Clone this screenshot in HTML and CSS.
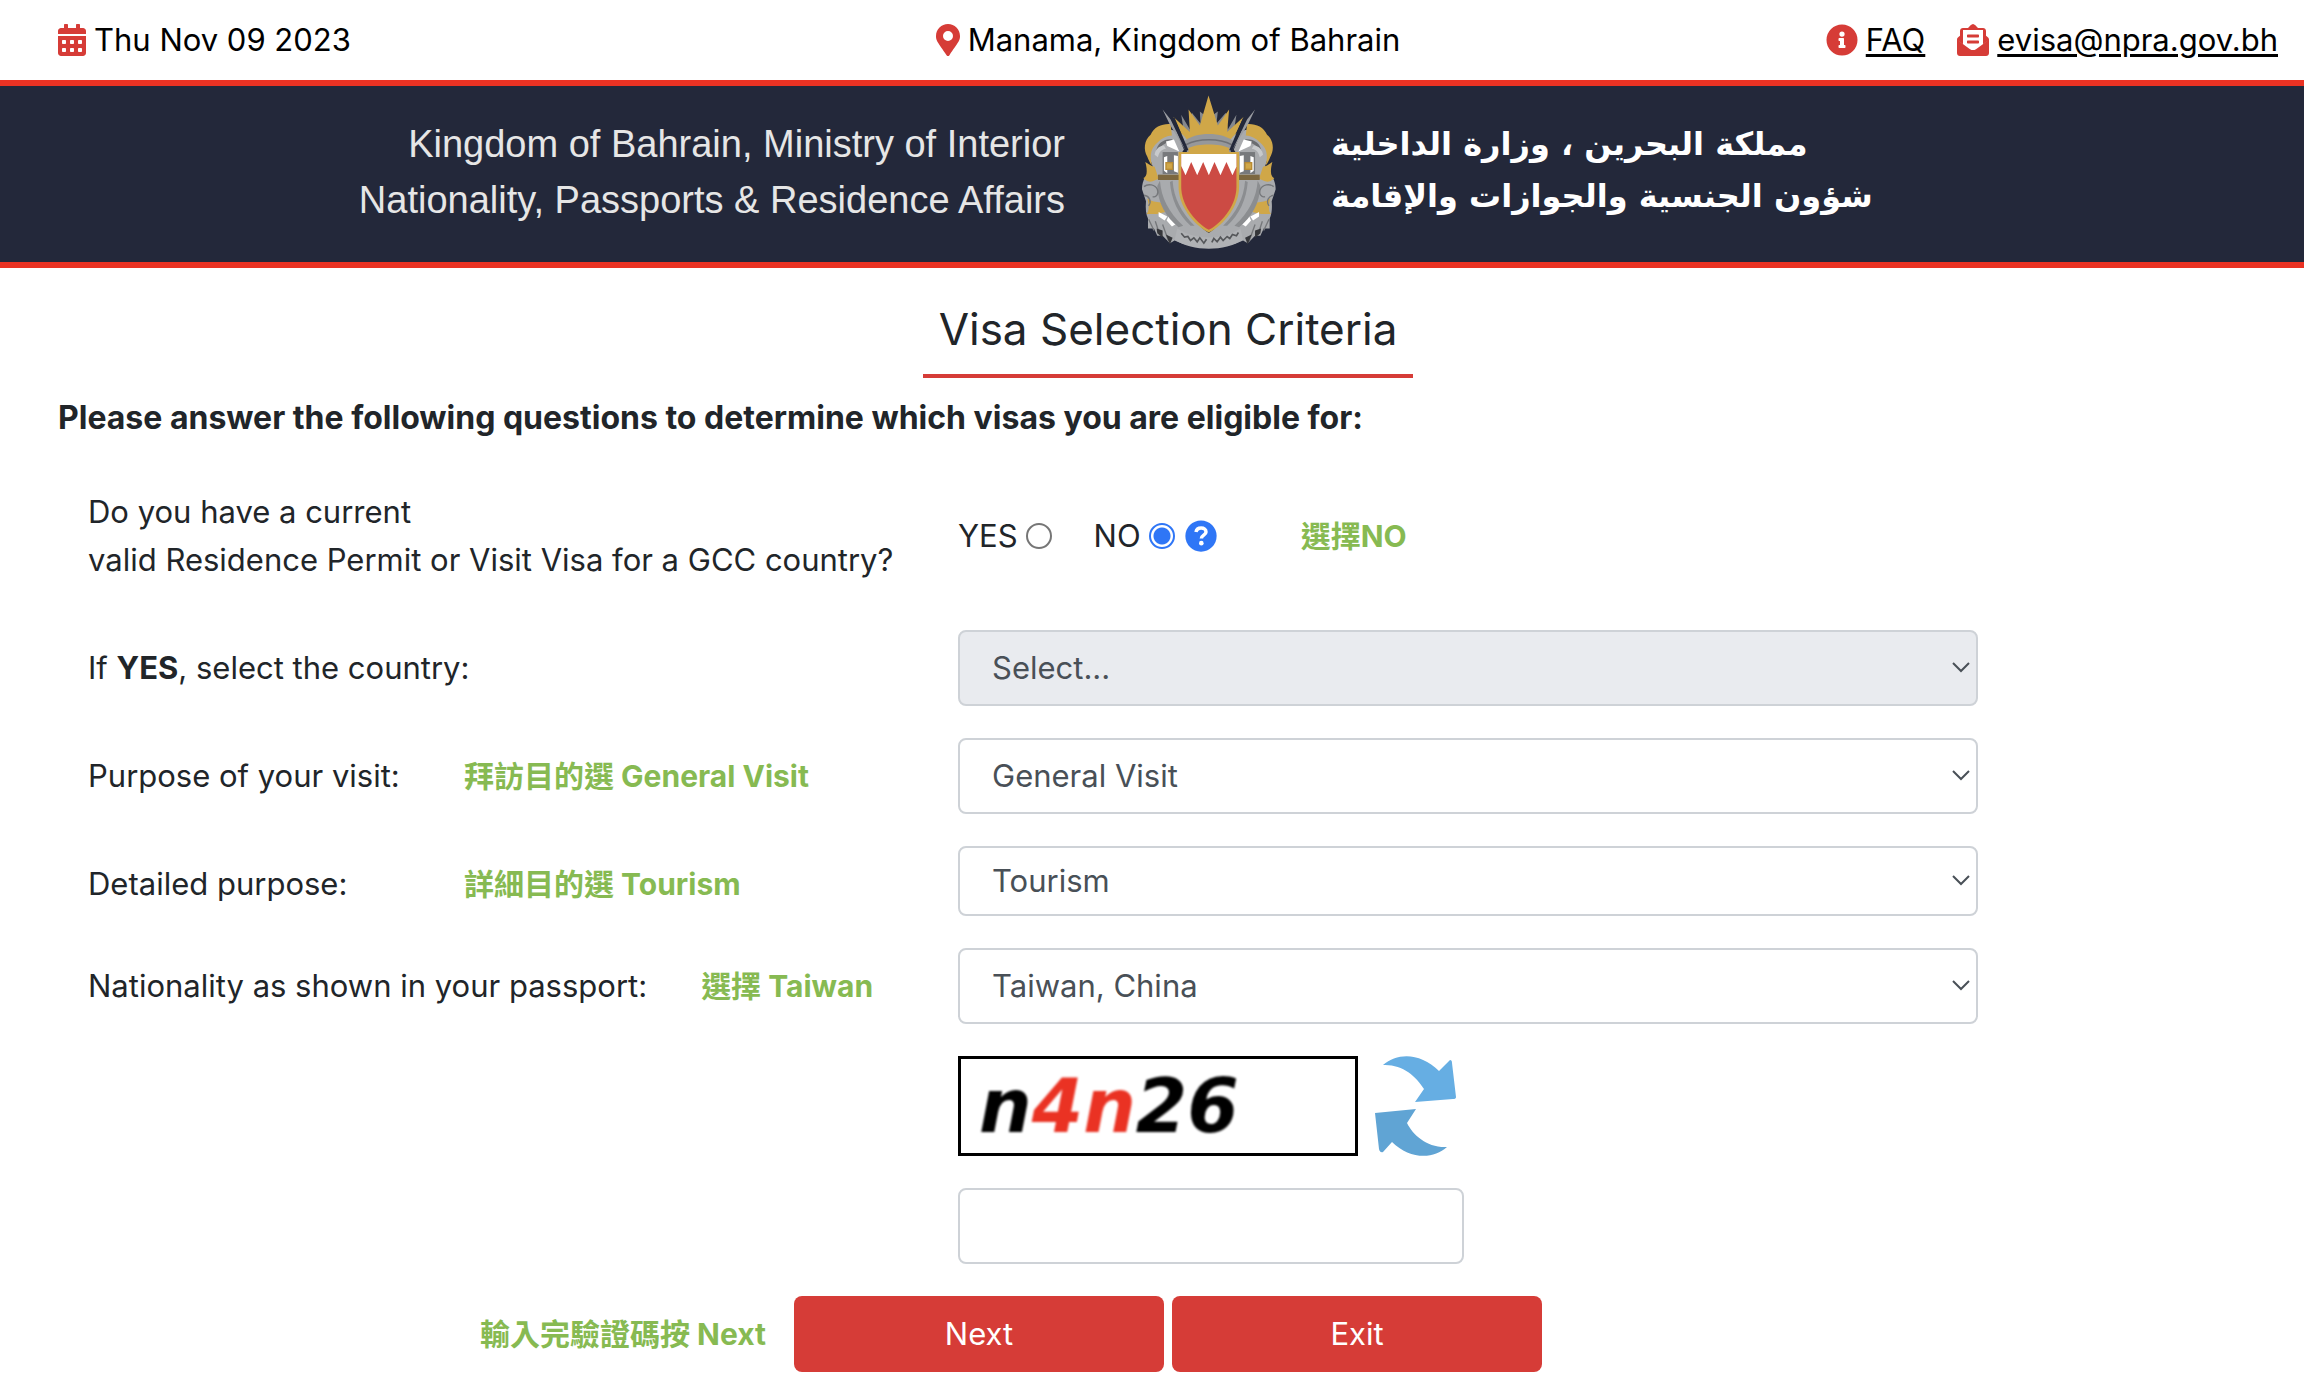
FILE: index.html
```html
<!DOCTYPE html>
<html lang="en">
<head>
  <meta charset="UTF-8" />
  <title>Visa Selection Criteria</title>
  <meta name="viewport" content="width=device-width, initial-scale=1.0" />
  <link rel="stylesheet" href="styles.css">
</head>
<body>
  <div class="topbar">
    <div class="topbar-item">
      <svg class="icon" width="28" height="32" viewBox="0 0 448 512" aria-hidden="true"><path d="M0 464c0 26.500 21.500 48 48 48h352c26.500 0 48-21.500 48-48V192H0v272zm320-196c0-6.600 5.400-12 12-12h40c6.600 0 12 5.400 12 12v40c0 6.600-5.400 12-12 12h-40c-6.600 0-12-5.400-12-12v-40zm0 128c0-6.600 5.400-12 12-12h40c6.600 0 12 5.400 12 12v40c0 6.600-5.400 12-12 12h-40c-6.600 0-12-5.400-12-12v-40zM192 268c0-6.600 5.400-12 12-12h40c6.600 0 12 5.400 12 12v40c0 6.600-5.400 12-12 12h-40c-6.600 0-12-5.400-12-12v-40zm0 128c0-6.600 5.400-12 12-12h40c6.600 0 12 5.400 12 12v40c0 6.600-5.400 12-12 12h-40c-6.600 0-12-5.400-12-12v-40zM64 268c0-6.600 5.400-12 12-12h40c6.600 0 12 5.400 12 12v40c0 6.600-5.400 12-12 12H76c-6.600 0-12-5.400-12-12v-40zm0 128c0-6.600 5.400-12 12-12h40c6.600 0 12 5.400 12 12v40c0 6.600-5.400 12-12 12H76c-6.600 0-12-5.400-12-12v-40zM400 64h-48V16c0-8.800-7.200-16-16-16h-32c-8.800 0-16 7.200-16 16v48H160V16c0-8.800-7.200-16-16-16h-32c-8.800 0-16 7.200-16 16v48H48C21.500 64 0 85.500 0 112v48h448v-48c0-26.500-21.500-48-48-48z"/></svg>
      <span>Thu Nov 09 2023</span>
    </div>
    <div class="topbar-item">
      <svg class="icon" width="24" height="32" viewBox="0 0 384 512" aria-hidden="true"><path d="M172 502C27 291 0 270 0 192 0 86 86 0 192 0s192 86 192 192c0 78-27 99-172 310-9 13-30 13-40 0zM192 272a80 80 0 1 0 0-160 80 80 0 0 0 0 160z"/></svg>
      <span>Manama, Kingdom of Bahrain</span>
    </div>
    <div class="topbar-links">
      <div class="topbar-item">
        <svg class="icon" width="32" height="32" viewBox="0 0 512 512" aria-hidden="true"><path d="M256 8a248 248 0 1 0 0 496 248 248 0 0 0 0-496zm0 110a42 42 0 1 1 0 84 42 42 0 0 1 0-84zm56 254c0 7-5 12-12 12h-88c-7 0-12-5-12-12v-24c0-7 5-12 12-12h12v-64h-12c-7 0-12-5-12-12v-24c0-7 5-12 12-12h64c7 0 12 5 12 12v100h12c7 0 12 5 12 12v24z"/></svg>
        <a href="#faq">FAQ</a>
      </div>
      <div class="topbar-item">
        <svg class="icon" width="32" height="32" viewBox="0 0 512 512" aria-hidden="true"><path d="M176 216h160c9 0 16-7 16-16v-16c0-9-7-16-16-16H176c-9 0-16 7-16 16v16c0 9 7 16 16 16zm-16 80c0 9 7 16 16 16h160c9 0 16-7 16-16v-16c0-9-7-16-16-16H176c-9 0-16 7-16 16v16zm96 121c-16 0-33-5-47-15L0 251v213c0 27 21 48 48 48h416c27 0 48-21 48-48V251L303 402c-14 10-31 15-47 15zm237-205c-9-7-17-13-29-23V112c0-27-21-48-48-48h-77l-12-8C312 39 279 0 256 0s-56 39-71 56l-12 8H96c-27 0-48 21-48 48v77c-12 10-20 16-29 23C7 221 0 235 0 250l96 70V96h320v224l96-70c0-15-7-29-19-38z"/></svg>
        <a href="mailto:evisa@npra.gov.bh">evisa@npra.gov.bh</a>
      </div>
    </div>
  </div>

  <header class="banner">
    <div class="banner-en">
      Kingdom of Bahrain, Ministry of Interior<br>
      Nationality, Passports &amp; Residence Affairs
    </div>
    <svg class="emblem" width="137" height="156" viewBox="60 22 412 468" role="img" aria-label="Coat of arms of Bahrain">
      <defs>
        <!-- left half of the mantling, mirrored for the right -->
        <g id="mantling">
          <path fill="#a9abae" d="M206 168c-16-38-64-52-102-24-26 22-24 52-14 72l12 34c-22 8-36 30-36 58l12 36c-2 22 0 40 6 52l0 30 18 0 10 22 16 0 22 22 14-8c34 16 66 20 104 20V440C220 410 186 350 184 200z"/>
          <path fill="#d0a748" d="M152 112c-24-2-50 8-60 32-20 16-22 46-10 66 4 10 8 20 14 26-8-34-2-52 16-68 14-14 24-20 44-22z"/>
          <path fill="#6b6d70" d="M108 196c4-26 22-40 50-38l-8 10c-18 0-30 10-36 30z"/>
          <path fill="#c8cacc" d="M104 204c2-16 12-26 28-28l6 10c-14 2-22 12-24 26z"/>
          <path fill="#d0a748" d="M76 226c12 8 20 14 28 14l12 36-18 8c-14 4-22-4-28-10 10-2 14-18 6-48zM82 336c14 10 26 10 40 12l14 28-26 6-30 0c8-8 8-26 2-46z"/>
          <path fill="#fff" d="M138 164l24-6 16 36-36-16zM116 376l26 14-8 12-18-12zM146 388l26 22-16 10-16-18z"/>
          <path fill="#8b8d90" d="M120 282c4 52 26 94 70 136l-14 4c-38-30-62-72-64-124zM158 282c4 54 26 94 66 136l-12 0c-38-36-58-80-62-132z"/>
          <path fill="none" stroke="#75777a" stroke-width="4" d="M72 300c12-10 34-6 40 8s-4 26-14 22M72 326c16 2 24 18 14 32M86 398l16 34M106 404l14 42M128 414l18 50"/>
          <path fill="#35363a" d="M110 426l18 6 0 22-16-14zM138 444l20 10-8 20z"/>
          <path fill="#77797c" d="M128 196h46v66h-46z"/>
          <path fill="#fff" d="M132 212l10-4v52l-10-8zM162 206l12 2v50l-12-4z"/>
          <path fill="#b98b33" d="M136 226h24v24h-24z"/>
          <path fill="#d0a748" d="M140 230h16v16h-16z"/>
          <path fill="#7c6740" d="M114 264h64v16h-64z"/>
        </g>
      </defs>
      <path fill="#85888d" d="M184 84l26 44 6-50 26 32-2-36 26 20 28-20-4 36 28-32 6 50 26-44-14 90H198z"/>
      <path fill="#d0a748" d="M160 90l50 46-4-68 34 48 26-90 28 90 34-48-6 68 50-46-36 76c-44-14-96-14-140 0z"/>
      <use href="#mantling"/>
      <use href="#mantling" transform="matrix(-1 0 0 1 534 0)"/>
      <path fill="#96989b" d="M192 164c34-30 116-30 150 0l-10 34H202z"/>
      <path fill="none" stroke="#6f7175" stroke-width="5" d="M198 174c38-20 100-20 138 0"/>
      <path fill="#d0a748" d="M206 184c30-14 92-14 122 0v16H206z"/>
      <path stroke="#23283a" stroke-width="12" d="M158 94l42 98M376 94l-42 98"/>
      <path fill="#9b9da2" d="M128 68l24 30 44 92-46-76zM406 68l-24 30-44 92 46-76z"/>
      <path fill="#d0a748" d="M176 196h182v104c0 56-42 112-91 138-49-26-91-82-91-138z"/>
      <path fill="#cc4b44" d="M184 202h166v98c0 52-36 102-83 130-47-28-83-78-83-130z"/>
      <path fill="#fff" d="M184 202h166v38l-12 26-18-40-18 40-18-40-17 40-17-40-18 40-18-40-17 40-13-28z"/>
      <path fill="#b0b2b5" d="M172 426c54 36 136 36 190 0l8 34c-56 36-150 36-206 0z"/>
      <path fill="none" stroke="#55575a" stroke-width="5" d="M184 440l10 12 10-2 8 12 10-8 10 12 8-12 12 16 8-12M276 468l6-12 10 10 10-14 8 10 12-12 8 6 8-12 12 4 6-10"/>
    </svg>
    <div class="banner-ar" lang="ar" dir="rtl">
      <div>مملكة البحرين ، وزارة الداخلية</div>
      <div>شؤون الجنسية والجوازات والإقامة</div>
    </div>
  </header>

  <main class="content">
    <h1>Visa Selection Criteria</h1>
    <p class="intro">Please answer the following questions to determine which visas you are eligible for:</p>

    <form id="visaForm">
      <div class="row row-question">
        <div class="question">
          <span id="permitLabel">Do you have a current<br>valid Residence Permit or Visit Visa for a GCC country?</span>
        </div>
        <div class="choices" role="radiogroup" aria-labelledby="permitLabel">
          <label class="choice">YES <input type="radio" name="permit" value="yes"></label>
          <label class="choice">NO <input type="radio" name="permit" value="no" checked></label>
          <button type="button" class="help" aria-label="Help">
            <svg width="32" height="32" viewBox="0 0 512 512"><circle cx="256" cy="256" r="250" fill="#2f76f6"/><path d="M176 192c8-44 40-64 82-64 46 0 78 24 78 62 0 54-74 50-74 106" fill="none" stroke="#fff" stroke-width="56"/><circle cx="261" cy="370" r="37" fill="#fff"/></svg>
          </button>
          <span class="note">選擇NO</span>
        </div>
      </div>

      <div class="row">
        <div class="question">
          <label for="country">If <b>YES</b>, select the country:</label>
        </div>
        <select id="country" disabled><option>Select...</option></select>
      </div>

      <div class="row">
        <div class="question">
          <label for="purpose">Purpose of your visit:</label>
          <span class="note">拜訪目的選 General Visit</span>
        </div>
        <select id="purpose"><option>General Visit</option></select>
      </div>

      <div class="row">
        <div class="question">
          <label for="detail">Detailed purpose:</label>
          <span class="note">詳細目的選 Tourism</span>
        </div>
        <select id="detail" class="compact"><option>Tourism</option></select>
      </div>

      <div class="row">
        <div class="question">
          <label for="nationality">Nationality as shown in your passport:</label>
          <span class="note">選擇 Taiwan</span>
        </div>
        <select id="nationality"><option>Taiwan, China</option></select>
      </div>

      <div class="row">
        <div class="captcha">
          <div class="captcha-image"><span>n</span><span class="red">4n</span><span>26</span></div>
          <button type="button" class="refresh" aria-label="Refresh code">
            <svg width="84" height="100" viewBox="0 0 84 100"><path fill="#66aee3" d="M9 9C24-4 47-3 65 15L76 4q2 0 2 3l4 34q0 2-3 2l-38 3 9-13C42 20 28 8 9 9z"/><path fill="#60a4d4" d="M1 57l41-4-9 14c6 12 20 25 40 24-14 13-38 12-55-5L9 96q-3 1-4-3z"/></svg>
          </button>
        </div>
      </div>

      <div class="row">
        <input type="text" id="captchaCode" class="code" aria-label="Verification code" autocomplete="off">
      </div>

      <div class="actions">
        <span class="note">輸入完驗證碼按 Next</span>
        <button type="submit" class="btn">Next</button>
        <button type="button" class="btn">Exit</button>
      </div>
    </form>
  </main>
</body>
</html>
```
FILE: styles.css
```css
* {
  box-sizing: border-box;
}

body {
  margin: 0;
  font-family: Inter, "Noto Sans CJK TC", sans-serif;
  font-size: 31px;
  line-height: 48px;
  color: #212529;
  background-color: white;
}

button,
input,
select {
  font: inherit;
  margin: 0;
}

.topbar {
  display: grid;
  grid-template-columns: 1fr auto 1fr;
  align-items: center;
  height: 80px;
  padding: 0 26px 0 58px;
  color: black;
}

.topbar-item {
  display: flex;
  align-items: center;
  gap: 8px;
}

.topbar-links {
  display: flex;
  justify-content: flex-end;
  gap: 32px;
}

.topbar a {
  color: black;
  text-underline-offset: 3px;
  text-decoration-thickness: 3px;
}

.icon {
  fill: #d63c37;
}

.banner {
  display: flex;
  border-top: 6px solid #ea3223;
  border-bottom: 6px solid #ea3223;
  background-color: #23283a;
  padding: 8px 0 12px;
}

.banner-en {
  width: calc(50% - 87px);
  padding-top: 22px;
  text-align: right;
  font-family: "Liberation Sans", Arial, sans-serif;
  font-size: 38px;
  line-height: 56px;
  color: #e6e6e6;
}

.emblem {
  margin: 0 54px 0 75px;
}

.banner-ar {
  padding-top: 24px;
  font-family: "DejaVu Sans", sans-serif;
  font-size: 32px;
  font-weight: 700;
  line-height: 52px;
  text-align: left;
  color: white;
}

.content {
  padding: 32px 26px 24px 58px;
}

h1 {
  width: fit-content;
  margin: 0 auto;
  padding: 0 16px 16px;
  border-bottom: 4px solid #d63c37;
  font-size: 44px;
  font-weight: 400;
  line-height: 58px;
}

.intro {
  margin: 16px 0 32px;
  font-size: 32px;
  font-weight: 700;
}

form {
  display: flex;
  flex-direction: column;
  gap: 32px;
  padding-left: 30px;
}

.row {
  display: grid;
  grid-template-columns: 870px minmax(0, 1020px);
  align-items: start;
}

.question {
  display: flex;
  gap: 54px;
  padding-top: 14px;
}

.question label {
  min-width: 322px;
}

.row-question {
  align-items: center;
}

.row-question .question {
  padding-bottom: 14px;
}

.note {
  color: #87ba52;
  font-size: 30px;
  font-weight: 700;
  white-space: nowrap;
}

.choices {
  display: flex;
  align-items: center;
}

.choice {
  display: flex;
  align-items: center;
  gap: 8px;
  margin-right: 42px;
}

.choice + .choice {
  margin-right: 10px;
}

input[type="radio"] {
  appearance: none;
  width: 26px;
  height: 26px;
  border: 2px solid #767676;
  border-radius: 50%;
  background-color: white;
}

input[type="radio"]:checked {
  border-color: #2f76f6;
  background: radial-gradient(circle, #2f76f6 8px, white 9px);
}

.help,
.refresh {
  display: flex;
  padding: 0;
  border: none;
  background: none;
  cursor: pointer;
}

.choices .note {
  margin-left: 84px;
}

select,
.code {
  width: 100%;
  height: 76px;
  padding: 0 32px;
  border: 2px solid #ced2d7;
  border-radius: 8px;
  background-color: white;
  color: #495057;
}

select {
  appearance: none;
  background-image: url("data:image/svg+xml,%3Csvg xmlns='http://www.w3.org/2000/svg' width='18' height='12' viewBox='0 0 18 12'%3E%3Cpath d='M1 1l8 8 8-8' fill='none' stroke='%23495057' stroke-width='2'/%3E%3C/svg%3E");
  background-repeat: no-repeat;
  background-position: right 6px center;
}

select:disabled {
  background-color: #e9ebef;
  opacity: 1;
}

.compact {
  height: 70px;
}

.captcha,
.code {
  grid-column: 2;
}

.captcha {
  display: flex;
  gap: 16px;
}

.captcha-image {
  width: 400px;
  height: 100px;
  padding-left: 18px;
  border: 3px solid black;
  color: black;
  font-family: "DejaVu Sans", sans-serif;
  font-size: 74px;
  font-style: italic;
  font-weight: 700;
  line-height: 94px;
}

.captcha-image span {
  filter: blur(1px);
}

.captcha-image .red {
  color: #ea3223;
}

.code {
  width: 506px;
}

.actions {
  display: flex;
  align-items: center;
  gap: 8px;
  padding-left: 392px;
}

.actions .note {
  margin-right: 20px;
}

.btn {
  width: 370px;
  height: 76px;
  border: none;
  border-radius: 8px;
  background-color: #d63c37;
  color: white;
  cursor: pointer;
}
```
